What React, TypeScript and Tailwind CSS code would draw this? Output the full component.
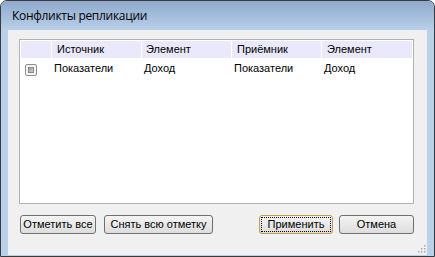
import React from "react";

const body = { fontFamily: '"Liberation Sans", Arial, sans-serif' };

function Check() {
  return (
    <div className="w-[12px] h-[12px] border border-[#8e8f8f] rounded-[2px] bg-[#f4f4f4] p-[2px]">
      <div className="w-full h-full border border-[#8a8a8a] bg-gradient-to-br from-[#9c9c9c] to-[#cfcfcf]" />
    </div>
  );
}

function Btn({ children, w, def }: { children: React.ReactNode; w: string; def?: boolean }) {
  return (
    <div
      className={`${w} h-[19px] rounded-[3px] border ${def ? "border-[#c99a45]" : "border-[#707070]"} bg-gradient-to-b from-[#f4f4f4] to-[#dddddd] flex items-center justify-center p-[2px]`}
    >
      <div
        className={`w-full h-full flex items-center justify-center text-[11px] text-black ${def ? "outline outline-1 outline-dotted outline-black" : ""}`}
      >
        {children}
      </div>
    </div>
  );
}

export default function App() {
  return (
    <div className="w-[435px] h-[257px] bg-white">
      <div className="w-[435px] h-[257px] border border-[#3a3a3a] rounded-t-[7px] flex flex-col overflow-hidden bg-[#b9d1ea]">
        <div className="h-[29px] bg-gradient-to-b from-[#8ea9cb] to-[#b9d0ea] flex items-center pl-[11px] pt-[1px]">
          <span
            className="text-[12px] text-black tracking-[-0.3px]"
            style={{ fontFamily: '"Open Sans", "Noto Sans", sans-serif' }}
          >
            Конфликты репликации
          </span>
        </div>
        <div className="flex-1 mx-[7px] mb-[1px] bg-[#f0f0f0] flex flex-col px-[11px] pt-[9px]" style={body}>
          <div className="w-[395px] h-[165px] border border-[#b2b2b2] bg-white p-[1px] text-[11px] text-black">
            <div className="flex h-[18px] bg-[#e9e9fb] border-b border-white">
              <div className="w-[31px] border-r border-white" />
              <div className="w-[90px] border-r border-white pl-[5px] flex items-center">Источник</div>
              <div className="w-[90px] border-r border-white pl-[4px] flex items-center">Элемент</div>
              <div className="w-[90px] border-r border-white pl-[5px] flex items-center">Приёмник</div>
              <div className="flex-1 pl-[5px] flex items-center">Элемент</div>
            </div>
            <div className="flex h-[19px] items-center">
              <div className="w-[31px] pl-[4px] pt-[2px] flex items-center">
                <Check />
              </div>
              <div className="w-[90px] pl-[2px]">Показатели</div>
              <div className="w-[90px] pl-[2px]">Доход</div>
              <div className="w-[90px] pl-[2px]">Показатели</div>
              <div className="flex-1 pl-[2px]">Доход</div>
            </div>
          </div>
          <div className="flex items-center mt-[11px] pl-[1px] w-[395px]">
            <Btn w="w-[76px]">Отметить все</Btn>
            <div className="w-[8px]" />
            <Btn w="w-[109px]">Снять всю отметку</Btn>
            <div className="flex-1" />
            <Btn w="w-[74px]" def>
              Применить
            </Btn>
            <div className="w-[6px]" />
            <Btn w="w-[75px]">Отмена</Btn>
          </div>
          <div className="flex-1 flex justify-end items-end pb-[2px] -mr-[10px]">
            <svg width="9" height="9" viewBox="0 0 9 9">
              {[
                [7, 1],
                [4, 4],
                [7, 4],
                [1, 7],
                [4, 7],
                [7, 7],
              ].map(([x, y], i) => (
                <rect key={i} x={x} y={y} width="1.5" height="1.5" fill="#a6a6a6" />
              ))}
            </svg>
          </div>
        </div>
      </div>
    </div>
  );
}
